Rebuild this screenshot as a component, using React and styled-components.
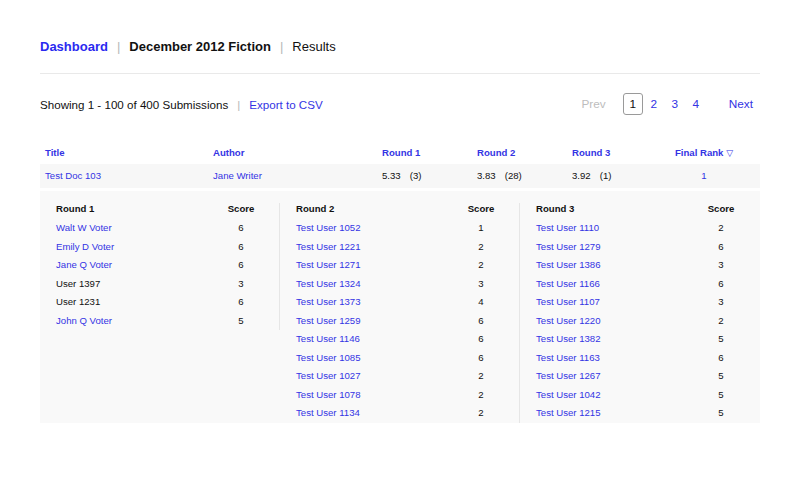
import React from "react";
import styled, { createGlobalStyle } from "styled-components";

const GlobalStyle = createGlobalStyle`
  body {
    margin: 0;
    background: #fff;
    font-family: "Liberation Sans", Arial, sans-serif;
    color: #1a1a1a;
  }
`;

const BLUE = "#3434e4";

const rounds = [
  {
    name: "Round 1",
    votes: [
      ["Walt W Voter", 6, true],
      ["Emily D Voter", 6, true],
      ["Jane Q Voter", 6, true],
      ["User 1397", 3, false],
      ["User 1231", 6, false],
      ["John Q Voter", 5, true],
    ],
  },
  {
    name: "Round 2",
    votes: [
      ["Test User 1052", 1, true],
      ["Test User 1221", 2, true],
      ["Test User 1271", 2, true],
      ["Test User 1324", 3, true],
      ["Test User 1373", 4, true],
      ["Test User 1259", 6, true],
      ["Test User 1146", 6, true],
      ["Test User 1085", 6, true],
      ["Test User 1027", 2, true],
      ["Test User 1078", 2, true],
      ["Test User 1134", 2, true],
    ],
  },
  {
    name: "Round 3",
    votes: [
      ["Test User 1110", 2, true],
      ["Test User 1279", 6, true],
      ["Test User 1386", 3, true],
      ["Test User 1166", 6, true],
      ["Test User 1107", 3, true],
      ["Test User 1220", 2, true],
      ["Test User 1382", 5, true],
      ["Test User 1163", 6, true],
      ["Test User 1267", 5, true],
      ["Test User 1042", 5, true],
      ["Test User 1215", 5, true],
    ],
  },
];

export default function App() {
  return (
    <>
      <GlobalStyle />
      <Page>
        <Breadcrumb>
          <Crumb href="#" $link $bold>Dashboard</Crumb>
          <Sep>|</Sep>
          <Crumb $bold>December 2012 Fiction</Crumb>
          <Sep>|</Sep>
          <Crumb>Results</Crumb>
        </Breadcrumb>

        <Toolbar>
          <Summary>
            Showing 1 - 100 of 400 Submissions
            <Sep>|</Sep>
            <Link href="#">Export to CSV</Link>
          </Summary>
          <Pager>
            <PageLink $disabled>Prev</PageLink>
            <PageNum $current>1</PageNum>
            <PageNum href="#">2</PageNum>
            <PageNum href="#">3</PageNum>
            <PageNum href="#">4</PageNum>
            <PageLink href="#" $next>Next</PageLink>
          </Pager>
        </Toolbar>

        <HeadRow>
          <HeadCell>Title</HeadCell>
          <HeadCell>Author</HeadCell>
          <HeadCell>Round 1</HeadCell>
          <HeadCell>Round 2</HeadCell>
          <HeadCell>Round 3</HeadCell>
          <HeadCell $center>
            Final Rank <Arrow>▽</Arrow>
          </HeadCell>
        </HeadRow>

        <DataRow>
          <Cell><TableLink href="#">Test Doc 103</TableLink></Cell>
          <Cell><TableLink href="#">Jane Writer</TableLink></Cell>
          <Cell>5.33<Rank>(3)</Rank></Cell>
          <Cell>3.83<Rank>(28)</Rank></Cell>
          <Cell>3.92<Rank>(1)</Rank></Cell>
          <Cell $center><TableLink href="#">1</TableLink></Cell>
        </DataRow>

        <Detail>
          {rounds.map((r, i) => (
            <Votes key={r.name} $last={i === rounds.length - 1}>
              <VoteHead>{r.name}</VoteHead>
              <VoteHead $score>Score</VoteHead>
              {r.votes.map(([who, score, link]) => (
                <React.Fragment key={who}>
                  <Voter>{link ? <TableLink href="#">{who}</TableLink> : who}</Voter>
                  <Score>{score}</Score>
                </React.Fragment>
              ))}
            </Votes>
          ))}
        </Detail>
      </Page>
    </>
  );
}

const Page = styled.div`
  width: 720px;
  margin: 0 auto;
  padding-top: 39px;
`;

const Breadcrumb = styled.div`
  display: flex;
  align-items: center;
  font-size: 13px;
  line-height: 16px;
  padding-bottom: 18px;
  border-bottom: 1px solid #e9e9e9;
`;

const Crumb = styled.a`
  color: ${(p) => (p.$link ? "#2a2af0" : "#111")};
  font-weight: ${(p) => (p.$bold ? 700 : 400)};
  text-decoration: none;
`;

const Sep = styled.span`
  color: #b8b8b8;
  margin: 0 9px 0 9px;
  font-weight: 400;
`;

const Toolbar = styled.div`
  display: flex;
  justify-content: space-between;
  align-items: center;
  margin-top: 19px;
  height: 22px;
`;

const Summary = styled.div`
  font-size: 11.6px;
  color: #111;
`;

const Link = styled.a`
  color: ${BLUE};
  text-decoration: none;
`;

const Pager = styled.div`
  display: flex;
  align-items: center;
  font-size: 11.8px;
  padding-right: 7px;
`;

const PageLink = styled.a`
  color: ${(p) => (p.$disabled ? "#bdbdbd" : BLUE)};
  text-decoration: none;
  margin-right: ${(p) => (p.$next ? 0 : "17px")};
  margin-left: ${(p) => (p.$next ? "22px" : 0)};
`;

const PageNum = styled.a`
  display: inline-flex;
  align-items: center;
  justify-content: center;
  box-sizing: border-box;
  width: 20px;
  height: 22px;
  margin-right: 1px;
  color: ${(p) => (p.$current ? "#111" : BLUE)};
  border: 1px solid ${(p) => (p.$current ? "#9a9a9a" : "transparent")};
  border-radius: 3px;
  text-decoration: none;
`;

const cols = "168px 169px 95px 95px 95px 1fr";

const HeadRow = styled.div`
  display: grid;
  grid-template-columns: ${cols};
  margin-top: 32px;
  height: 12px;
  line-height: 12px;
  margin-bottom: 5px;
`;

const HeadCell = styled.div`
  padding-left: ${(p) => (p.$center ? 0 : "5px")};
  padding-right: ${(p) => (p.$center ? "14px" : 0)};
  text-align: ${(p) => (p.$center ? "center" : "left")};
  font-size: 9.6px;
  font-weight: 700;
  color: ${BLUE};
`;

const Arrow = styled.span`
  font-family: "DejaVu Sans", sans-serif;
  font-weight: 400;
  font-size: 9px;
`;

const DataRow = styled.div`
  display: grid;
  grid-template-columns: ${cols};
  height: 24px;
  line-height: 24px;
  background: #f7f7f7;
  font-size: 9.6px;
`;

const Cell = styled.div`
  padding-left: ${(p) => (p.$center ? 0 : "5px")};
  padding-right: ${(p) => (p.$center ? "14px" : 0)};
  text-align: ${(p) => (p.$center ? "center" : "left")};
  color: #111;
`;

const Rank = styled.span`
  margin-left: 9px;
`;

const TableLink = styled.a`
  color: ${BLUE};
  text-decoration: none;
`;

const Detail = styled.div`
  display: grid;
  grid-template-columns: repeat(3, 240px);
  align-items: start;
  margin-top: 3px;
  padding-top: 12px;
  background: #f9f9f9;
  font-size: 9.6px;
`;

const Votes = styled.div`
  display: grid;
  grid-template-columns: 1fr 40px;
  padding: 0 18px 0 16px;
  border-right: 1px solid ${(p) => (p.$last ? "transparent" : "#e6e6e6")};
`;

const VoteHead = styled.div`
  font-weight: 700;
  color: #111;
  height: 16px;
  line-height: 12px;
  text-align: ${(p) => (p.$score ? "center" : "left")};
`;

const Voter = styled.div`
  line-height: 18.5px;
  color: #111;
`;

const Score = styled.div`
  line-height: 18.5px;
  text-align: center;
  color: #111;
`;
